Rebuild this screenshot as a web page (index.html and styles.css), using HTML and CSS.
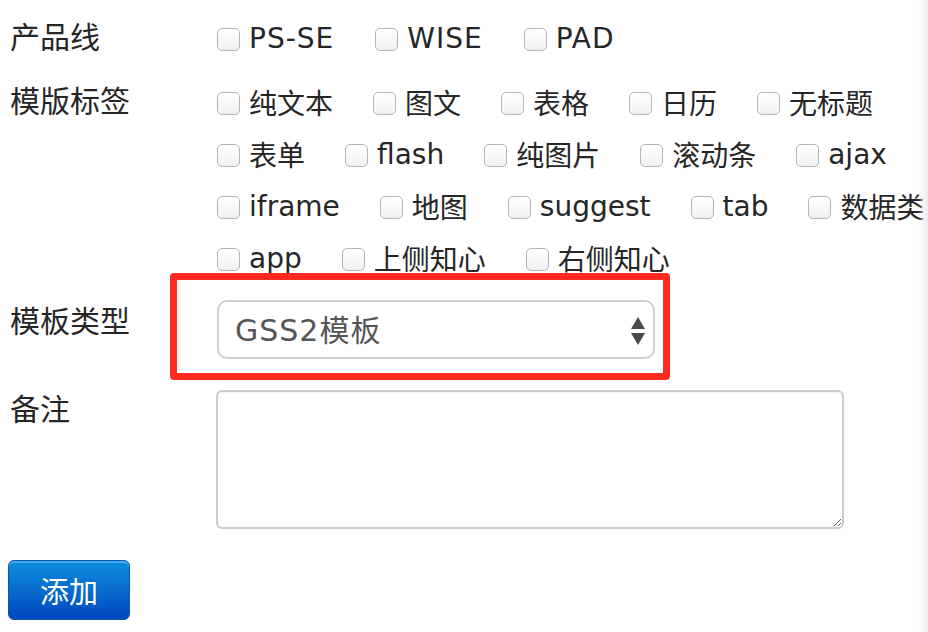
FILE: index.html
```html
<!DOCTYPE html>
<html lang="zh">
<head>
<meta charset="utf-8">
<title>添加模板</title>
<link rel="stylesheet" href="styles.css">
</head>
<body>
<form class="form">
  <div class="row row-product">
    <div class="label">产品线</div>
    <div class="options options-product">
      <label class="opt"><input type="checkbox"><span class="caps">PS-SE</span></label>
      <label class="opt"><input type="checkbox"><span class="caps">WISE</span></label>
      <label class="opt"><input type="checkbox"><span class="caps">PAD</span></label>
    </div>
  </div>
  <div class="row row-tags">
    <div class="label">模版标签</div>
    <div class="options">
      <label class="opt"><input type="checkbox"><span>纯文本</span></label>
      <label class="opt"><input type="checkbox"><span>图文</span></label>
      <label class="opt"><input type="checkbox"><span>表格</span></label>
      <label class="opt"><input type="checkbox"><span>日历</span></label>
      <label class="opt"><input type="checkbox"><span>无标题</span></label>
      <label class="opt"><input type="checkbox"><span>表单</span></label>
      <label class="opt"><input type="checkbox"><span>flash</span></label>
      <label class="opt"><input type="checkbox"><span>纯图片</span></label>
      <label class="opt"><input type="checkbox"><span>滚动条</span></label>
      <label class="opt"><input type="checkbox"><span>ajax</span></label>
      <label class="opt"><input type="checkbox"><span>iframe</span></label>
      <label class="opt"><input type="checkbox"><span>地图</span></label>
      <label class="opt"><input type="checkbox"><span>suggest</span></label>
      <label class="opt"><input type="checkbox"><span>tab</span></label>
      <label class="opt"><input type="checkbox"><span>数据类</span></label>
      <label class="opt"><input type="checkbox"><span>app</span></label>
      <label class="opt"><input type="checkbox"><span>上侧知心</span></label>
      <label class="opt"><input type="checkbox"><span>右侧知心</span></label>
    </div>
  </div>
  <div class="row row-type">
    <div class="label">模板类型</div>
    <div class="select-wrap">
      <div class="select">
        <span class="select-text">GSS2模板</span>
        <svg class="select-arrows" width="14" height="28" viewBox="0 0 14 28">
          <polygon points="7,0 14,12 0,12" fill="#4a4a4a"/>
          <polygon points="0,16 14,16 7,28" fill="#4a4a4a"/>
        </svg>
      </div>
      <div class="highlight"></div>
    </div>
  </div>
  <div class="row row-note">
    <div class="label">备注</div>
    <div class="textarea-wrap">
      <textarea class="textarea"></textarea>
    </div>
  </div>
  <div class="actions">
    <button type="button" class="btn">添加</button>
  </div>
</form>
</body>
</html>
```
FILE: styles.css
```css
html, body {
  margin: 0;
  padding: 0;
  background: #fff;
}
body {
  font-family: "DejaVu Sans", "Noto Sans CJK SC", sans-serif;
  font-size: 28px;
  color: #262626;
  width: 928px;
  height: 632px;
  overflow: hidden;
  position: relative;
}
body::after {
  content: "";
  position: absolute;
  top: 0;
  right: 0;
  width: 10px;
  height: 100%;
  background: linear-gradient(to right, rgba(240,240,240,0), #ececec);
}
.form {
  padding: 12px 0 0 10px;
}
.row {
  display: grid;
  grid-template-columns: 207px 790px;
}
.label {
  line-height: 52px;
  font-size: 30px;
  white-space: nowrap;
}
.row-product {
  margin-bottom: 12px;
}
.options {
  display: flex;
  flex-wrap: wrap;
  align-items: center;
}
.opt {
  display: flex;
  align-items: center;
  height: 52px;
  margin-right: 40px;
  white-space: nowrap;
}
.options-product .opt {
  margin-right: 41px;
}
.caps {
  letter-spacing: 1px;
}
.opt input {
  -webkit-appearance: none;
  appearance: none;
  width: 23px;
  height: 23px;
  margin: 2px 9px 0 0;
  border: 1.5px solid #b5b5b5;
  border-radius: 5px;
  background: linear-gradient(#ffffff, #f1f1f1);
  box-sizing: border-box;
  flex: none;
}
.row-type {
  margin-top: 16px;
}
.row-type .label {
  line-height: 44px;
}
.select-wrap {
  position: relative;
  width: 438px;
}
.select {
  height: 59px;
  box-sizing: border-box;
  border: 2px solid #cfcfcf;
  border-radius: 10px;
  background: #fff;
  display: flex;
  align-items: center;
  justify-content: space-between;
  padding: 0 8px 0 16px;
  color: #555;
  font-size: 30px;
}
.select-text {
  line-height: 1;
  padding-top: 2px;
  letter-spacing: 1px;
}
.select-arrows {
  display: block;
  margin-top: 2px;
}
.highlight {
  position: absolute;
  left: -47px;
  top: -27px;
  width: 500px;
  height: 107px;
  box-sizing: border-box;
  border: 7px solid #fe2a1f;
  border-radius: 4px;
}
.row-note {
  margin-top: 31px;
}
.row-note .label {
  line-height: 40px;
}
.textarea-wrap {
  margin-left: -1px;
}
.textarea {
  display: block;
  width: 628px;
  height: 139px;
  box-sizing: border-box;
  border: 2px solid #cccccc;
  border-radius: 6px;
  box-shadow: inset 0 1px 2px rgba(0,0,0,0.06);
  resize: both;
  margin: 0;
  font: inherit;
}
.actions {
  margin: 31px 0 0 -2px;
}
.btn {
  width: 122px;
  height: 60px;
  border: 1px solid #0b55b0;
  border-radius: 6px;
  background: linear-gradient(#0a8ddb, #0a6fcf 45%, #0047c0);
  box-shadow: inset 0 2px 0 rgba(255,255,255,0.25);
  color: #fff;
  font-family: "Noto Sans CJK SC", sans-serif;
  font-size: 29px;
  padding: 0;
  margin: 0;
  cursor: pointer;
}
```
